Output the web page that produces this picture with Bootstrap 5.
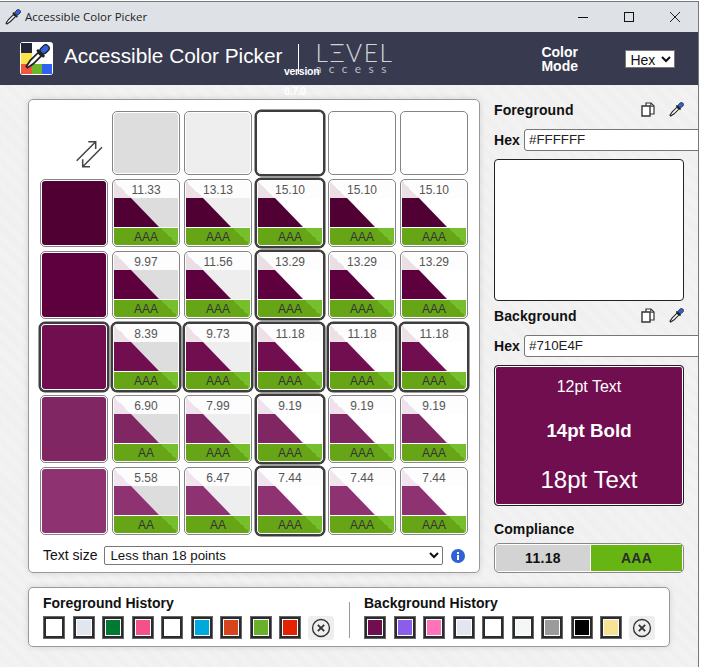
<!DOCTYPE html>
<html lang="en">
<head>
  <meta charset="UTF-8" />
  <meta name="viewport" content="width=device-width, initial-scale=1.0"/>
  <title>Accessible Color Picker</title>
  <link href="https://cdn.jsdelivr.net/npm/bootstrap@5.3.2/dist/css/bootstrap.min.css" rel="stylesheet"/>
  <style>
    html, body { height: 100%; overflow: hidden; background: #fff; }
    body { font-family: "Liberation Sans", Arial, sans-serif; font-size: 14px; color: #111; }
    .app-window { width: 699px; height: 666px; margin-top: 1px; border-top: 1px solid #777; border-right: 1px solid #777; overflow: hidden; }
    .title-strip { height: 30px; background: #dee1e6; padding-left: 4px; }
    .title-text { font-family: "Open Sans", sans-serif; font-size: 11.5px; margin-left: 4px; color: #222; }
    .win-ctrl { gap: 30px; margin-right: 15px; }
    .app-head { height: 53px; background: #383b4f; color: #fff; padding-left: 20px; }
    .app-logo { width: 33px; height: 33px; flex: none; }
    .app-name { font-size: 20.8px; margin: 0 0 6px 11px; white-space: nowrap; }
    .ver-tag { left: 284px; top: 29px; font-size: 10.5px; line-height: 20px; font-weight: 700; letter-spacing: -.3px; color: #fff; }
    .logo-rule { width: 1px; height: 30px; background: #fff; margin-left: 16px; }
    .level-mark { margin: 0 0 1px 16px; color: #d5d6dc; font-family: Lato, sans-serif; font-weight: 300; width: 80px; line-height: 1; }
    .level-big { font-size: 24.5px; letter-spacing: 1.6px; display: block; height: 21px; line-height: 21px; }
    .level-small { font-size: 12px; letter-spacing: 7.4px; display: block; font-weight: 400; color: #b9bbc5; }
    .mode-label { margin-left: 146px; font-weight: 700; line-height: 14px; width: 84px; }
    .mode-select { width: 50px; height: 18px; font-size: 14px; font-family: inherit; padding: 0; border: 1px solid #777; background: #fff; color: #111; }
    .app-main { height: 582px; background: repeating-linear-gradient(45deg, #f4f4f4 0 1px, #eeeeee 1px 2px); padding: 14px 0 0 28px; }
    .picker-panel { width: 452px; height: 474px; background: #fff; border: 1px solid #999; border-radius: 5px; padding: 11px; box-shadow: 0 0 6px rgba(0,0,0,.12); }
    .matrix { display: grid; grid-template-columns: repeat(6, 68px); grid-template-rows: 64px repeat(5, 68px); gap: 4px; }
    .swap-cell { padding: 29px 0 0 35px; }
    .tile { border: 1px solid #858585; border-radius: 5px; padding: 1px; background: #fff; overflow: hidden; }
    .tile-on { border-color: #3d3d3d; box-shadow: 0 0 0 1.5px #3d3d3d; }
    .tile-fill { width: 100%; height: 100%; border-radius: 3px; }
    .tile-num { height: 17px; font-size: 12px; line-height: 18px; text-align: center; color: #555; background: #fdfdfd; }
    .tile-corner { width: 17px; height: 17px; left: 0; top: 0; }
    .tile-mid { height: 29px; }
    .tile-wedge { width: 100%; height: 100%; clip-path: polygon(0 0, 17px 0, 45px 100%, 0 100%); }
    .tile-grade { height: 17px; margin-top: 1px; font-size: 12px; line-height: 19px; text-align: center; color: #333; background-color: #66a516; background-image: linear-gradient(to top right, transparent 50%, #74bf2b 50%); background-size: 17px 17px; background-position: right top; background-repeat: no-repeat; border-radius: 0 0 3px 3px; overflow: hidden; }
    .size-row { margin-top: 11px; padding-left: 3px; height: 19px; }
    .size-select { width: 339px; height: 19px; margin-left: 7px; font-family: inherit; font-size: 13.3px; padding: 0 1px; border: 1px solid #777; border-radius: 2px; background: #fff; color: #111; }
    .info-dot { width: 14px; height: 14px; margin-left: 8px; }
    .side-col { width: 190px; margin-left: 14px; }
    .side-head { height: 22px; font-weight: 700; letter-spacing: .1px; }
    .side-gap { margin-top: 4px; }
    .side-tools { gap: 13px; }
    .hex-row { height: 22px; margin-top: 8px; margin-bottom: 8px; width: 210px; }
    .hex-label { font-weight: 700; width: 30px; letter-spacing: .1px; }
    .hex-input { width: 180px; height: 22px; min-height: 0; padding: 0 4px 2px; font-size: 13.3px; border: 1px solid #777; border-radius: 3px 0 0 3px; font-family: inherit; color: #222; flex: none; }
    .preview-box { width: 190px; height: 142px; border: 1px solid #222; border-radius: 4px; background: #fff; }
    .preview-bg { height: 141px; background: #710e4f; color: #fff; box-shadow: inset 0 0 0 1px #fff; }
    .pv-12 { font-size: 16px; padding-top: 9px; height: 40px; }
    .pv-14 { font-size: 18.7px; font-weight: 700; padding-top: 11px; height: 44px; }
    .pv-18 { font-size: 24px; padding-top: 12px; }
    .comp-title { margin-top: 15px; font-weight: 700; letter-spacing: .1px; height: 22px; line-height: 16px; }
    .comp-bar { height: 30px; width: 190px; border: 1px solid #888; border-radius: 5px; overflow: hidden; font-weight: 700; line-height: 26px; text-align: center; letter-spacing: .3px; box-shadow: inset 0 0 0 1px #fff; padding: 1px; }
    .comp-ratio { width: 95px; background: #d3d3d3; border-right: 1px solid #fff; }
    .comp-grade { flex: 1; background: #66b512; color: #2c2c2c; }
    .history-panel { width: 642px; height: 60px; margin-top: 14px; background: #fff; border: 1px solid #999; border-radius: 5px; padding: 6px 14px; box-shadow: 0 0 6px rgba(0,0,0,.12); }
    .hist-block { width: 291px; }
    .hist-title { font-weight: 700; height: 22px; line-height: 18px; }
    .hist-row { gap: 7.5px; }
    .swatch { width: 22px; height: 23px; padding: 1px; background: #fff; border: 3px solid #2b2b2f; outline: 1px solid #666; outline-offset: -1px; flex: none; }
    .swatch-fill { width: 100%; height: 100%; }
    .hist-clear { width: 26px; height: 24px; background: #eee; border-radius: 3px; margin-left: -1px; flex: none; }
    .hist-rule { width: 1px; height: 36px; background: #999; margin: 8px 14px 0 15px; flex: none; }
  </style>
</head>
<body>
  <svg width="0" height="0" class="position-absolute">
    <symbol id="dropper" viewBox="0 0 24 24">
      <g transform="rotate(45 12 12)">
        <path d="M10 8h4v10l-1.200 6h-1.600L10 18z" fill="#fff" stroke="#222" stroke-width="1.600"/>
        <rect x="7.500" y="5.500" width="9" height="2.600" rx="1" fill="#222"/>
        <rect x="9" y="-2.500" width="6" height="8.500" rx="2.600" fill="#3162e0" stroke="#222" stroke-width="1.200"/>
      </g>
    </symbol>
    <symbol id="copy-pages" viewBox="0 0 14 15">
      <path d="M5 1h5l3 3v8H5z" fill="#fff" stroke="#333" stroke-width="1.200"/>
      <path d="M9.800 1v3.200H13" fill="none" stroke="#333"/>
      <path d="M1 4h8v10H1z" fill="#fff" stroke="#333" stroke-width="1.400"/>
    </symbol>
    <symbol id="clear-x" viewBox="0 0 22 22">
      <circle cx="11" cy="11" r="9.300" fill="none" stroke="#333" stroke-width="1.500"/>
      <path d="M7.500 7.500l7 7m0-7l-7 7" stroke="#333" stroke-width="2"/>
    </symbol>
  </svg>

  <div class="app-window">
    <!-- Title bar -->
    <div class="title-strip d-flex align-items-center">
      <svg width="17" height="17"><use href="#dropper"/></svg>
      <span class="title-text">Accessible Color Picker</span>
      <div class="win-ctrl d-flex align-items-center ms-auto">
        <svg width="16" height="16"><path d="M3 8.500h10" stroke="#111"/></svg>
        <svg width="16" height="16"><rect x="3.500" y="3.500" width="9" height="9" fill="none" stroke="#111"/></svg>
        <svg width="16" height="16"><path d="M3 3l10 10m0-10L3 13" stroke="#222"/></svg>
      </div>
    </div>

    <!-- App header -->
    <header class="app-head d-flex align-items-center position-relative">
      <svg class="app-logo" viewBox="0 0 33 33">
        <rect x=".5" y=".5" width="32" height="32" rx="2" fill="#fff" stroke="#fff"/>
        <rect x="1" y="1" width="11" height="10" fill="#23253a"/>
        <rect x="1" y="11" width="11" height="11" fill="#fbe34e"/>
        <rect x="1" y="22" width="11" height="10" fill="#f0573c"/>
        <rect x="12" y="22" width="10" height="10" fill="#6db52b"/>
        <rect x="22" y="22" width="10" height="10" fill="#2f62ee"/>
        <svg x="3" y="2" width="27" height="27"><use href="#dropper"/></svg>
      </svg>
      <span class="app-name">Accessible Color Picker</span>
      <span class="ver-tag position-absolute">version<br>0.7.0</span>
      <span class="logo-rule"></span>
      <span class="level-mark"><span class="level-big">LΞVEL</span><span class="level-small">access</span></span>
      <span class="mode-label">Color<br>Mode</span>
      <select class="mode-select"><option>Hex</option></select>
    </header>

    <main class="app-main">
      <div class="d-flex">
        <section class="picker-panel">
          <div class="matrix" id="matrix"></div>
          <div class="size-row d-flex align-items-center">
            <span>Text size</span>
            <select class="size-select"><option>Less than 18 points</option></select>
            <svg class="info-dot" viewBox="0 0 14 14"><circle cx="7" cy="7" r="7" fill="#2f62d8"/><rect x="6" y="6" width="2" height="5" fill="#fff"/><rect x="6" y="3" width="2" height="2" fill="#fff"/></svg>
          </div>
        </section>

        <aside class="side-col">
          <div class="side-head d-flex align-items-center justify-content-between">
            <span>Foreground</span>
            <span class="side-tools d-flex me-0">
              <svg width="14" height="15"><use href="#copy-pages"/></svg>
              <svg width="16" height="16"><use href="#dropper"/></svg>
            </span>
          </div>
          <div class="hex-row d-flex align-items-center">
            <span class="hex-label">Hex</span>
            <input class="hex-input form-control" value="#FFFFFF"/>
          </div>
          <div class="preview-box"></div>

          <div class="side-head side-gap d-flex align-items-center justify-content-between">
            <span>Background</span>
            <span class="side-tools d-flex">
              <svg width="14" height="15"><use href="#copy-pages"/></svg>
              <svg width="16" height="16"><use href="#dropper"/></svg>
            </span>
          </div>
          <div class="hex-row d-flex align-items-center">
            <span class="hex-label">Hex</span>
            <input class="hex-input form-control" value="#710E4F"/>
          </div>
          <div class="preview-box preview-bg text-center">
            <div class="pv-12">12pt Text</div>
            <div class="pv-14">14pt Bold</div>
            <div class="pv-18">18pt Text</div>
          </div>

          <div class="comp-title">Compliance</div>
          <div class="comp-bar d-flex">
            <div class="comp-ratio">11.18</div>
            <div class="comp-grade">AAA</div>
          </div>
        </aside>
      </div>

      <section class="history-panel d-flex">
        <div class="hist-block">
          <div class="hist-title">Foreground History</div>
          <div class="hist-row d-flex" id="fgHistory"></div>
        </div>
        <div class="hist-rule"></div>
        <div class="hist-block">
          <div class="hist-title">Background History</div>
          <div class="hist-row d-flex" id="bgHistory"></div>
        </div>
      </section>
    </main>
  </div>

  <script src="https://cdn.jsdelivr.net/npm/bootstrap@5.3.2/dist/js/bootstrap.bundle.min.js"></script>
  <script>
    const fgCols = ['#dddddd', '#eeeeee', '#ffffff', '#ffffff', '#ffffff'];
    const rows = [
      { bg: '#500032', tint: '#ebe0e6', vals: ['11.33', '13.13', '15.10', '15.10', '15.10'], grades: ['AAA', 'AAA', 'AAA', 'AAA', 'AAA'] },
      { bg: '#5e003e', tint: '#ebdfe6', vals: ['9.97', '11.56', '13.29', '13.29', '13.29'], grades: ['AAA', 'AAA', 'AAA', 'AAA', 'AAA'] },
      { bg: '#710e4f', tint: '#eee0e8', vals: ['8.39', '9.73', '11.18', '11.18', '11.18'], grades: ['AAA', 'AAA', 'AAA', 'AAA', 'AAA'], on: true },
      { bg: '#802662', tint: '#f0e2ec', vals: ['6.90', '7.99', '9.19', '9.19', '9.19'], grades: ['AA', 'AAA', 'AAA', 'AAA', 'AAA'] },
      { bg: '#8f3272', tint: '#f2e4ee', vals: ['5.58', '6.47', '7.44', '7.44', '7.44'], grades: ['AA', 'AA', 'AAA', 'AAA', 'AAA'] }
    ];

    let html = `<div class="swap-cell"><svg width="30" height="28" viewBox="0 0 30 28" fill="none" stroke="#444" stroke-width="1.500">
      <path d="M1.700 20.700L20.700 1.700M13.300 1.700h7.400V9"/><path d="M27 7.300L7.700 26.700M7.700 19.300v7.400H15"/></svg></div>`;
    fgCols.forEach((c, i) => {
      html += `<div class="tile ${i === 2 ? 'tile-on' : ''}"><div class="tile-fill" style="background:${c}"></div></div>`;
    });
    rows.forEach(r => {
      html += `<div class="tile ${r.on ? 'tile-on' : ''}"><div class="tile-fill" style="background:${r.bg}"></div></div>`;
      fgCols.forEach((c, i) => {
        html += `<div class="tile ${r.on || i === 2 ? 'tile-on' : ''}">
          <div class="tile-num position-relative">
            <span class="tile-corner position-absolute" style="background:linear-gradient(to top right, ${r.tint} 50%, transparent 50%)"></span>
            <span class="position-relative">${r.vals[i]}</span>
          </div>
          <div class="tile-mid" style="background:${c}"><div class="tile-wedge" style="background:${r.bg}"></div></div>
          <div class="tile-grade">${r.grades[i]}</div>
        </div>`;
      });
    });
    document.getElementById('matrix').innerHTML = html;

    const swatches = list => list.map(c =>
      `<div class="swatch"><div class="swatch-fill" style="background:${c}"></div></div>`).join('') +
      '<div class="hist-clear d-flex align-items-center justify-content-center"><svg width="20" height="20"><use href="#clear-x"/></svg></div>';
    document.getElementById('fgHistory').innerHTML = swatches(['#ffffff', '#e2e6ef', '#007a33', '#f4508a', '#ffffff', '#00a9dc', '#d5451e', '#68b22b', '#e52200']);
    document.getElementById('bgHistory').innerHTML = swatches(['#710e4f', '#8a5eeb', '#ff73b8', '#e2e6ef', '#ffffff', '#f5f7f5', '#9b9b9b', '#000000', '#f7e393']);
  </script>
</body>
</html>
